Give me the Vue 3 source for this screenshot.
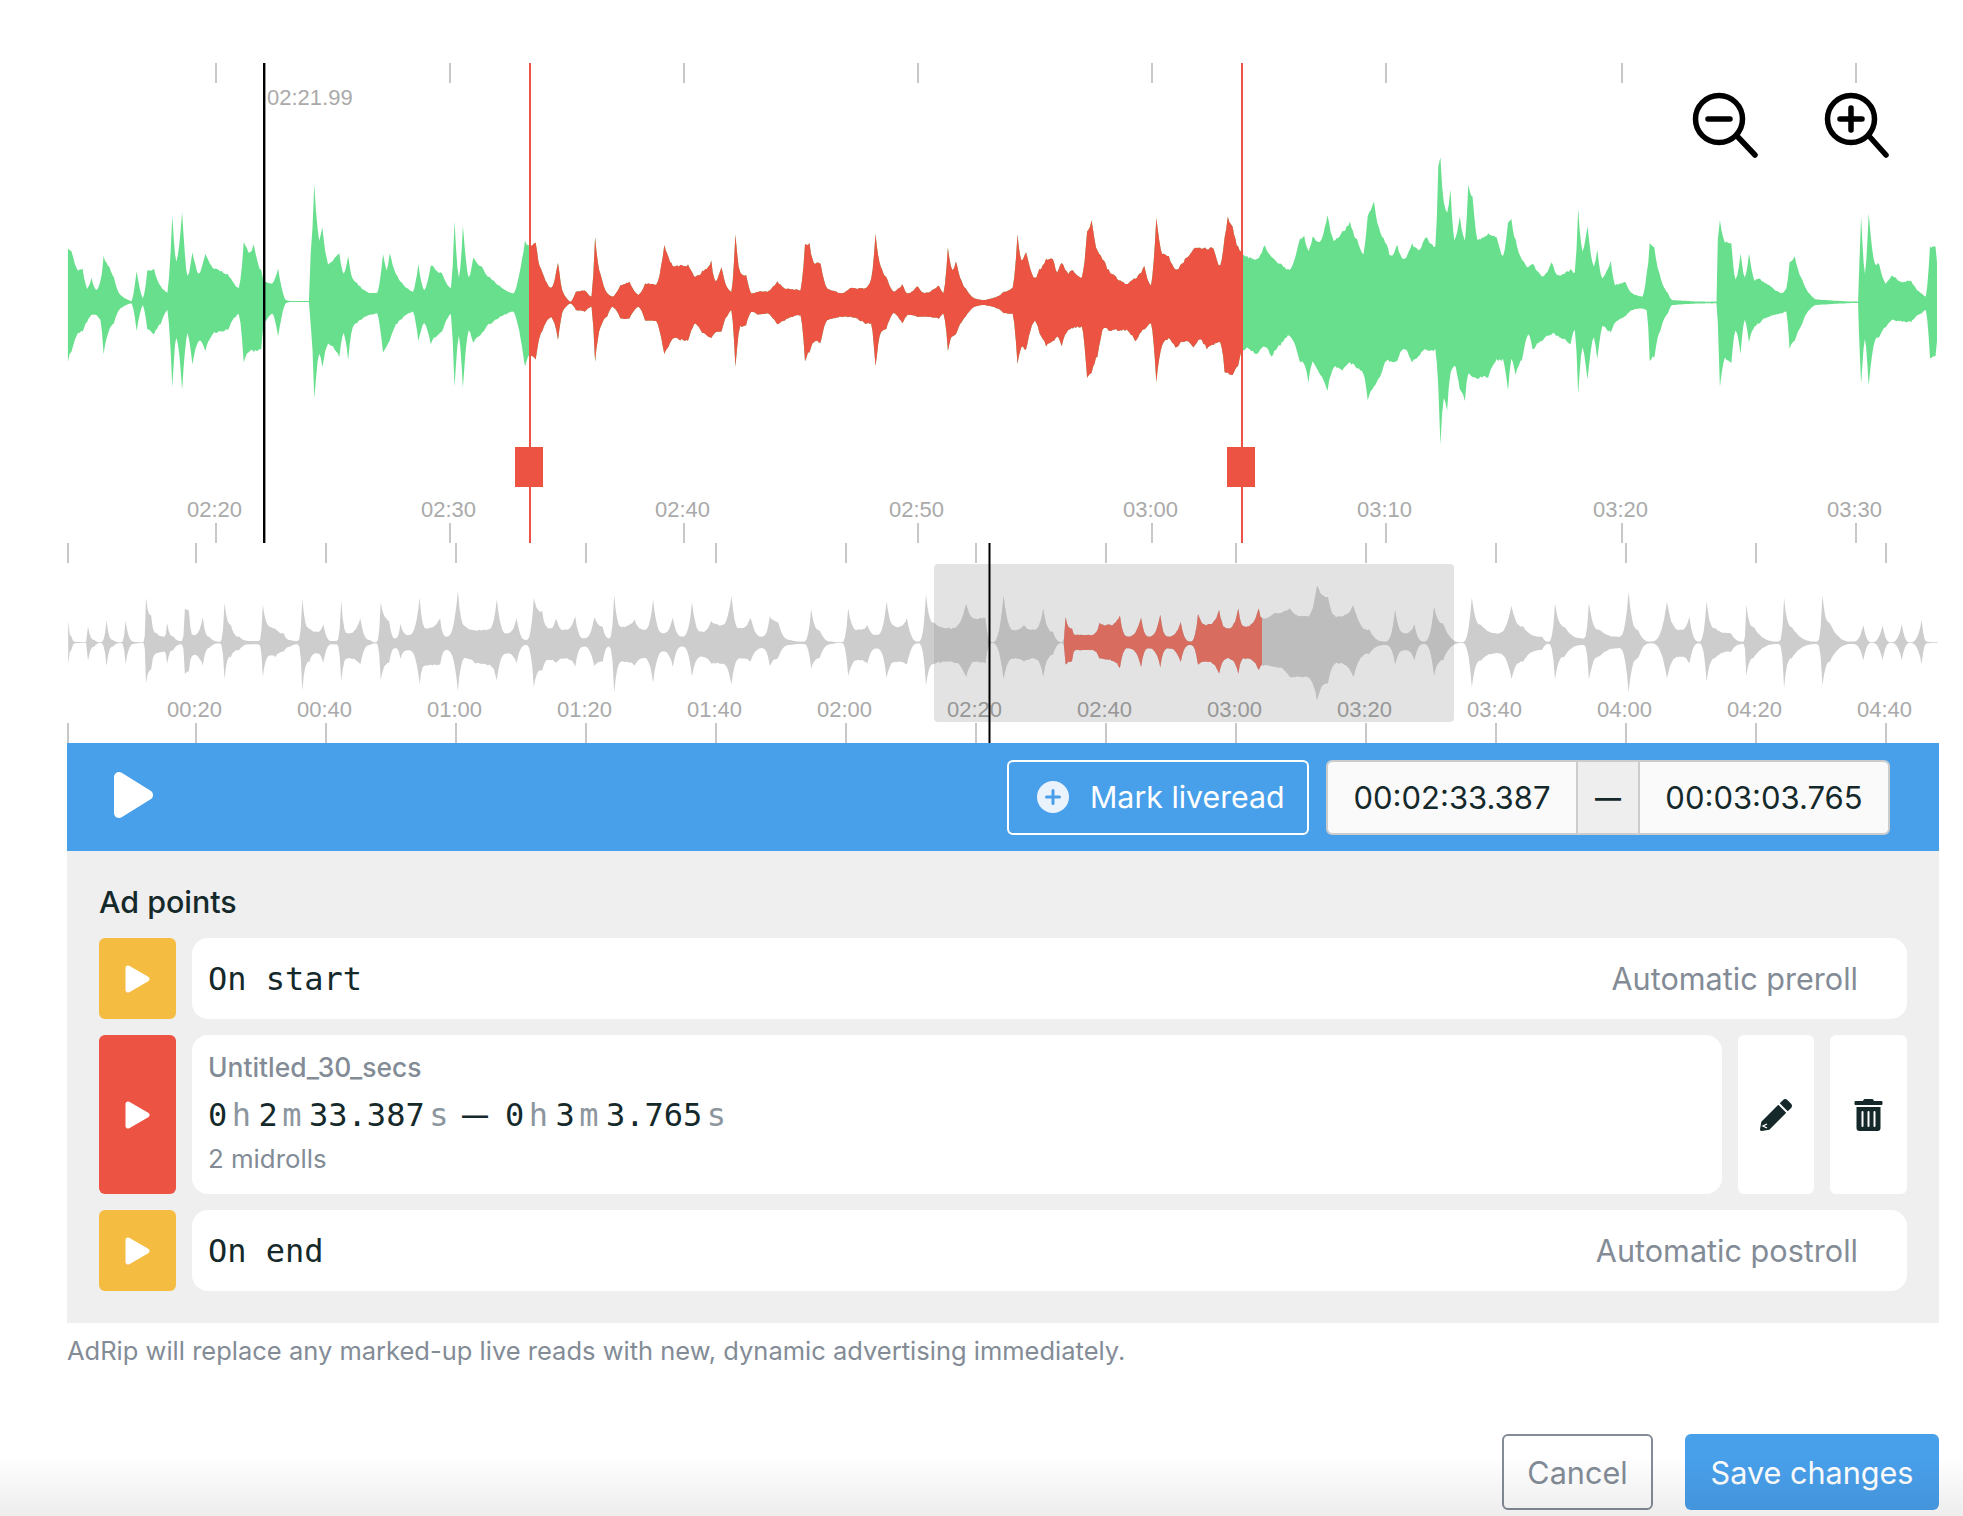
<script setup>
// Envelope points read off the recording: [x, top y, bottom y] in crop coordinates
const MAIN_A = [[152,630,962],[160,632,935],[175,690,880],[185,685,875],[195,745,845],[205,715,825],[215,750,825],[225,725,840],[232,648,945],[245,680,870],[255,712,850],[270,765,805],[295,783,790],[306,690,875],[320,775,795],[330,695,870],[345,685,885],[360,740,850],[375,758,810],[386,530,1040],[395,668,890],[408,512,1045],[420,710,880],[431,635,975],[445,700,900],[460,640,930],[480,685,880],[510,700,870],[535,745,822],[546,605,965],[560,640,930],[568,615,935],[585,690,930],[590,725,855],[610,730,820],[623,685,888],[640,780,790],[650,783,786],[692,783,786],[696,640,850],[704,433,1080],[715,600,940],[722,560,985],[735,670,910],[760,640,950],[770,700,880],[780,645,960],[790,715,860],[830,760,825],[845,758,820],[858,640,940],[866,690,920],[873,640,905],[890,710,850],[925,755,815],[937,672,900],[950,750,850],[965,675,910],[990,700,875],[1010,745,822],[1018,545,1040],[1028,715,890],[1037,558,1045],[1050,715,870],[1060,655,910],[1080,680,880],[1100,715,850],[1150,760,815],[1176,605,980],[1186,620,945],[1200,605,955],[1212,690,880],[1235,745,830],[1250,665,900],[1262,760,810],[1278,785,790],[1290,755,810],[1310,750,815],[1325,770,800],[1333,592,968],[1345,700,860],[1360,760,830],[1372,770,800],[1390,735,835],[1410,725,835],[1430,765,800],[1445,730,840],[1470,735,845],[1488,618,945],[1510,680,895]]
const MAIN_B = [[18,675,905],[35,710,850],[50,695,880],[70,665,895],[80,725,875],[93,682,875],[105,740,830],[115,755,810],[124,587,983],[135,700,860],[148,705,855],[160,760,815],[175,755,825],[195,755,820],[218,723,855],[235,745,840],[270,750,825],[280,612,965],[290,612,935],[300,670,905],[315,670,905],[330,745,840],[365,760,830],[380,745,830],[415,745,850],[428,720,850],[438,582,982],[450,680,875],[462,710,865],[478,755,820],[498,735,850],[510,760,825],[532,738,830],[548,760,830],[580,737,835],[590,760,820],[600,623,930],[610,690,890],[618,665,885],[640,745,830],[660,775,800],[680,780,795],[710,770,805],[725,755,820],[745,745,820],[756,582,975],[765,660,920],[775,635,930],[795,715,840],[805,690,880],[820,660,920],[835,655,905],[845,695,890],[855,665,915],[870,700,870],[880,688,865],[900,715,860],[912,575,1015],[922,542,1000],[935,630,950],[950,660,860],[960,690,870],[1000,730,870],[1020,715,905],[1040,680,870],[1055,738,850],[1067,533,1028],[1080,640,915],[1095,650,895],[1110,690,925],[1135,650,900],[1150,625,925],[1165,625,900],[1180,625,925],[1195,625,915],[1210,680,905],[1220,590,995],[1227,530,1000],[1238,560,1005],[1250,620,975],[1260,640,930],[1270,650,925],[1290,660,945],[1310,615,920],[1325,650,950],[1345,670,915],[1365,690,885]]
const MAIN_C = [[0,595,965],[10,590,970],[20,630,1025],[30,590,965],[45,610,1000],[65,525,1050],[80,600,980],[100,575,990],[118,545,970],[135,600,985],[150,640,1000],[160,525,1078],[175,487,1040],[190,575,1010],[205,610,960],[215,650,965],[230,615,965],[245,660,925],[265,610,965],[280,630,950],[297,590,930],[320,620,930],[327,380,1040],[332,352,1212],[340,490,1075],[348,520,1110],[356,450,1000],[365,600,975],[378,530,1050],[390,600,1080],[398,432,1000],[408,470,1010],[420,600,1015],[445,580,1010],[465,590,960],[480,650,960],[492,550,1050],[500,535,960],[510,600,1005],[525,660,960],[540,680,880],[550,670,930],[575,710,900],[595,665,880],[610,705,890],[640,690,915],[650,700,870],[658,505,1060],[668,635,925],[680,560,1020],[695,680,890],[703,630,960],[715,715,860],[735,660,880],[745,735,850],[770,725,830],[785,760,810],[810,770,805],[820,700,810],[827,610,960],[838,620,950],[850,700,880],[870,760,820],[880,780,795],[960,785,790],[985,785,790],[988,600,850],[993,542,1040],[1005,605,955],[1020,610,970],[1030,720,870],[1042,640,940],[1052,715,840],[1062,640,905],[1075,720,860],[1085,715,850],[1110,735,830],[1140,760,820],[1150,745,815],[1158,670,925],[1170,652,900],[1185,710,860],[1205,760,810],[1220,778,795],[1320,785,789],[1322,700,880],[1327,530,1030],[1336,700,900],[1345,522,1037],[1360,670,900],[1370,672,890],[1385,730,860],[1400,705,840],[1425,725,845],[1445,722,845],[1470,760,820],[1480,770,810],[1490,620,955],[1503,618,950],[1510,690,880]]
const MINI_A = [[107,275,400],[112,320,360],[118,335,340],[135,337,339],[138,288,392],[148,330,350],[158,337,339],[167,272,408],[177,330,350],[190,337,339],[197,272,402],[210,335,342],[225,337,339],[229,205,462],[237,255,420],[245,310,370],[258,320,365],[262,280,400],[272,320,360],[285,333,343],[290,235,432],[296,240,425],[303,315,375],[318,262,408],[328,320,355],[345,335,340],[352,218,445],[362,285,380],[375,320,360],[392,333,343],[406,333,343],[412,222,440],[425,290,375],[432,295,380],[445,310,365],[455,330,350],[467,333,343],[474,207,480],[485,295,395],[497,305,370],[507,283,400],[520,333,343],[528,333,343],[535,210,452],[545,310,385],[565,267,405],[580,330,345],[590,337,340],[597,218,452],[610,270,400],[620,325,355],[628,282,385],[640,315,360],[658,203,460],[668,295,405],[690,265,405],[700,320,360],[718,183,483],[730,290,385],[745,300,400],[765,298,405],[779,207,450],[795,310,370],[810,265,400],[825,330,345],[837,207,470],[850,245,420],[862,295,390],[872,265,400],[885,300,385],[902,258,410],[915,325,350],[932,262,410],[945,290,395],[955,325,350],[963,195,485],[975,290,395],[995,268,405],[1010,300,385],[1024,210,460],[1040,310,365],[1055,262,410],[1070,320,350],[1085,218,440],[1100,305,380],[1115,275,400],[1130,285,400],[1147,198,465],[1160,295,385],[1177,262,395],[1195,320,355],[1207,258,410],[1220,275,385],[1240,330,345],[1260,335,342],[1272,235,415],[1285,300,385],[1305,335,342],[1320,337,339],[1330,235,440],[1345,300,390],[1360,285,400],[1375,315,355],[1390,215,445],[1405,290,395],[1422,265,405],[1440,335,340],[1452,195,465],[1465,280,400],[1490,295,395],[1515,222,440],[1530,265,395],[1545,265,400]]
const MINI_B = [[50,337,339],[68,198,445],[85,300,385],[100,285,395],[115,300,385],[130,237,440],[145,305,375],[160,337,339],[165,262,405],[175,295,395],[180,315,360],[205,315,360],[218,280,385],[232,285,390],[250,255,415],[262,320,355],[283,262,410],[295,320,355],[313,255,410],[325,320,355],[345,275,395],[360,335,345],[372,250,405],[385,285,395],[405,240,430],[418,295,385],[435,237,430],[445,290,385],[467,235,420],[472,265,405],[490,250,410],[515,235,440],[540,260,440],[558,165,510],[575,200,460],[590,260,400],[615,225,440],[640,300,370],[665,335,345],[680,240,400],[695,310,360],[710,285,390],[725,335,342],[741,232,435],[755,280,390],[785,337,339],[800,200,470],[815,285,390],[840,310,370],[862,225,445],[880,290,395],[910,320,360],[920,335,342],[930,222,450],[945,290,380],[975,325,345],[983,220,450],[1000,300,380],[1030,320,355],[1045,185,485],[1060,300,385],[1080,335,340],[1105,215,445],[1125,300,380],[1140,262,400],[1155,335,340],[1167,212,455],[1180,295,385],[1205,310,365],[1225,335,342],[1229,225,440],[1240,290,385],[1280,335,342],[1288,205,472],[1300,290,385],[1340,335,342],[1348,195,465],[1360,280,395],[1395,335,342],[1412,285,390],[1425,337,339],[1442,285,390],[1455,337,339],[1472,285,390],[1485,337,339],[1503,272,402],[1512,335,340],[1530,337,339]]

// turn crop coordinates into page coordinates
function place(list, left, scale, top) {
  return list.map(([x, a, b]) => [left + x / scale, top + a / 3, top + b / 3])
}

// peaks rise steeply and tail off quickly, so the edge bends inwards between points
function bend(from, to, t, growing, power) {
  const eased = growing ? Math.pow(t, power) : 1 - Math.pow(1 - t, power)
  return from + (to - from) * eased
}

// fills in the fine jagged edge between envelope points
function wavePath(list, grain, power) {
  let seed = 7
  const rnd = () => {
    seed = (seed * 16807) % 2147483647
    return seed / 2147483647 - 0.5
  }
  const top = []
  const bottom = []
  for (let i = 0; i < list.length - 1; i++) {
    const [x0, a0, b0] = list[i]
    const [x1, a1, b1] = list[i + 1]
    const steps = Math.max(1, Math.round((x1 - x0) / 1.5))
    for (let s = 0; s < steps; s++) {
      const t = s / steps
      const a = bend(a0, a1, t, a1 < a0, power)
      const b = bend(b0, b1, t, b1 > b0, power)
      const n = Math.min(grain, (b - a) * 0.04)
      const x = (x0 + (x1 - x0) * t).toFixed(1)
      top.push(x + ' ' + (a + rnd() * n).toFixed(1))
      bottom.unshift(x + ' ' + (b + rnd() * n).toFixed(1))
    }
  }
  return 'M' + top.concat(bottom).join('L') + 'Z'
}

const mainPath = wavePath([
  ...place(MAIN_A, 0, 2.24, 40),
  ...place(MAIN_B, 680, 2.24, 40),
  ...place(MAIN_C, 1300, 2.365, 40)
], 2.5, 1.5)
const miniPath = wavePath([
  ...place(MINI_A, 0, 1.568, 530),
  ...place(MINI_B, 960, 1.563, 530)
], 1.5, 2.8)

const mainTicks = [216, 450, 684, 918, 1152, 1386, 1622, 1856]
const mainLabels = ['02:20', '02:30', '02:40', '02:50', '03:00', '03:10', '03:20', '03:30']
const miniLabels = ['00:20', '00:40', '01:00', '01:20', '01:40', '02:00', '02:20', '02:40', '03:00', '03:20', '03:40', '04:00', '04:20', '04:40']
const miniLabelTicks = miniLabels.map((_, i) => 196 + i * 130)
const miniTicks = [68, ...miniLabelTicks]
</script>

<template>
  <div class="page">
    <svg class="timeline" width="1963" height="743" viewBox="0 0 1963 743">
      <defs>
        <clipPath id="mainPicked"><rect x="530" y="60" width="712" height="460" /></clipPath>
        <clipPath id="miniSelected"><rect x="934" y="545" width="520" height="180" /></clipPath>
        <clipPath id="miniPicked"><rect x="1064" y="545" width="198" height="180" /></clipPath>
      </defs>

      <!-- zoomed waveform -->
      <g fill="#c8c8c8">
        <rect v-for="x in mainTicks" :key="'a' + x" :x="x - 1" y="63" width="2" height="20" />
        <rect v-for="x in mainTicks" :key="'b' + x" :x="x - 1" y="523" width="2" height="20" />
      </g>
      <text
        v-for="(label, i) in mainLabels"
        :key="label"
        class="tick-label"
        :x="mainTicks[i] - 1.5"
        y="517"
        text-anchor="middle"
      >{{ label }}</text>
      <path :d="mainPath" fill="#68df8c" />
      <path :d="mainPath" fill="#ed5343" clip-path="url(#mainPicked)" />

      <rect x="263" y="63" width="2.4" height="480" fill="#000" />
      <text class="tick-label" x="267" y="105">02:21.99</text>
      <rect x="529" y="63" width="2" height="480" fill="#ed5343" />
      <rect x="1241" y="63" width="2" height="480" fill="#ed5343" />
      <rect x="515" y="447" width="28" height="40" fill="#ed5343" />
      <rect x="1227" y="447" width="28" height="40" fill="#ed5343" />

      <!-- overview waveform -->
      <g fill="#c8c8c8">
        <rect v-for="x in miniTicks" :key="'c' + x" :x="x - 1" y="543" width="2" height="20" />
        <rect v-for="x in miniTicks" :key="'d' + x" :x="x - 1" y="723" width="2" height="20" />
      </g>
      <text
        v-for="(label, i) in miniLabels"
        :key="label + 'm'"
        class="tick-label"
        :x="miniLabelTicks[i] - 1.5"
        y="717"
        text-anchor="middle"
      >{{ label }}</text>
      <rect x="934" y="564" width="520" height="158" rx="4" fill="#000" fill-opacity="0.11" />
      <path :d="miniPath" fill="#cdcdcd" />
      <path :d="miniPath" fill="#bdbdbd" clip-path="url(#miniSelected)" />
      <path :d="miniPath" fill="#d76c5f" clip-path="url(#miniPicked)" />
      <rect x="988.5" y="543" width="2" height="200" fill="#000" />

      <!-- zoom buttons -->
      <g fill="none" stroke="#000" stroke-width="5.5" stroke-linecap="round">
        <circle cx="1719" cy="119" r="23.5" />
        <path d="M1737 136 L1755 155" />
        <path d="M1708 119 H1730" />
        <circle cx="1851" cy="119" r="23.5" />
        <path d="M1869 136 L1886 155" />
        <path d="M1840 119 H1862 M1851 108 V130" />
      </g>
    </svg>

    <div class="content">
      <div class="toolbar">
        <svg class="big-play" width="39" height="46" viewBox="0 0 39 46">
          <path d="M5 5 L34 23 L5 41 Z" fill="#fff" stroke="#fff" stroke-width="10" stroke-linejoin="round" />
        </svg>
        <button class="mark-btn">
          <svg width="32" height="32" viewBox="0 0 32 32">
            <circle cx="16" cy="16" r="16" fill="#eaf3fc" />
            <path d="M16 9.5 V22.5 M9.5 16 H22.5" stroke="#489fea" stroke-width="3" stroke-linecap="round" />
          </svg>
          <span>Mark liveread</span>
        </button>
        <div class="range">
          <div class="range-field">00:02:33.387</div>
          <div class="range-sep">—</div>
          <div class="range-field">00:03:03.765</div>
        </div>
      </div>

      <div class="panel">
        <h3 class="panel-title">Ad points</h3>

        <div class="row">
          <div class="play-box yellow">
            <svg width="25" height="28" viewBox="0 0 25 28"><path d="M3 3 L22 14 L3 25 Z" fill="#fff" stroke="#fff" stroke-width="5" stroke-linejoin="round" /></svg>
          </div>
          <div class="row-body">
            <span class="mono">On start</span>
            <span class="muted">Automatic preroll</span>
          </div>
        </div>

        <div class="row tall">
          <div class="play-box red">
            <svg width="25" height="28" viewBox="0 0 25 28"><path d="M3 3 L22 14 L3 25 Z" fill="#fff" stroke="#fff" stroke-width="5" stroke-linejoin="round" /></svg>
          </div>
          <div class="row-body stacked">
            <div class="ad-name">Untitled_30_secs</div>
            <div class="mono times">
              <span>0</span><span class="unit">h</span><span>2</span><span class="unit">m</span><span>33.387</span><span class="unit">s</span>
              <span class="dash">—</span>
              <span>0</span><span class="unit">h</span><span>3</span><span class="unit">m</span><span>3.765</span><span class="unit">s</span>
            </div>
            <div class="ad-count">2 midrolls</div>
          </div>
          <div class="icon-box edit">
            <svg width="32" height="32" viewBox="0 0 512 512">
              <path fill="#15292b" d="M497.9 142.1l-46.1 46.1c-4.7 4.7-12.3 4.7-17 0l-111-111c-4.7-4.7-4.7-12.3 0-17l46.1-46.1c18.7-18.7 49.1-18.7 67.9 0l60.1 60.1c18.8 18.7 18.8 49.1 0 67.9zM284.2 99.8L21.6 362.4.4 483.9c-2.9 16.4 11.4 30.6 27.8 27.8l121.5-21.3 262.6-262.6c4.7-4.7 4.7-12.3 0-17l-111-111c-4.8-4.7-12.4-4.7-17.1 0z" />
              <path fill="none" stroke="#fff" stroke-width="22" d="M112 400 L48 432 L112 464" />
            </svg>
          </div>
          <div class="icon-box">
            <svg width="29" height="32" viewBox="0 0 448 512"><path fill="#15292b" d="M32 464a48 48 0 0 0 48 48h288a48 48 0 0 0 48-48V128H32zm272-256a16 16 0 0 1 32 0v224a16 16 0 0 1-32 0zm-96 0a16 16 0 0 1 32 0v224a16 16 0 0 1-32 0zm-96 0a16 16 0 0 1 32 0v224a16 16 0 0 1-32 0zM432 32H312l-9.4-18.7A24 24 0 0 0 281.1 0H166.8a23.72 23.72 0 0 0-21.4 13.3L136 32H16A16 16 0 0 0 0 48v32a16 16 0 0 0 16 16h416a16 16 0 0 0 16-16V48a16 16 0 0 0-16-16z" /></svg>
          </div>
        </div>

        <div class="row">
          <div class="play-box yellow">
            <svg width="25" height="28" viewBox="0 0 25 28"><path d="M3 3 L22 14 L3 25 Z" fill="#fff" stroke="#fff" stroke-width="5" stroke-linejoin="round" /></svg>
          </div>
          <div class="row-body">
            <span class="mono">On end</span>
            <span class="muted">Automatic postroll</span>
          </div>
        </div>
      </div>

      <p class="note">AdRip will replace any marked-up live reads with new, dynamic advertising immediately.</p>

      <div class="actions">
        <button class="btn-cancel">Cancel</button>
        <button class="btn-save">Save changes</button>
      </div>
    </div>

    <div class="fade"></div>
  </div>
</template>

<style scoped>
.page {
  position: relative;
  width: 1963px;
  height: 1516px;
  overflow: hidden;
  background: #fff;
  font-family: Inter, "Liberation Sans", sans-serif;
  color: #15292b;
}

.timeline {
  display: block;
}

.tick-label {
  font-family: "Liberation Sans", Arial, sans-serif;
  font-size: 22px;
  fill: #aaa;
}

.content {
  margin: 0 24px 0 67px;
}

/* blue bar */
.toolbar {
  display: flex;
  align-items: center;
  height: 108px;
  padding: 0 49px 0 47px;
  background: #489fea;
}

.big-play {
  margin-right: auto;
  margin-top: -4px;
}

.mark-btn {
  display: flex;
  align-items: center;
  gap: 21px;
  width: 302px;
  height: 75px;
  padding: 0 0 0 28px;
  border: 2px solid #fff;
  border-radius: 6px;
  background: transparent;
  color: #fff;
  font: 400 30.3px Inter, "Liberation Sans", sans-serif;
  box-sizing: border-box;
}

.range {
  display: flex;
  height: 75px;
  margin-left: 17px;
  border: 2px solid #ccc;
  border-radius: 6px;
  overflow: hidden;
  box-sizing: border-box;
  font-size: 31px;
}

.range-field {
  display: flex;
  align-items: center;
  justify-content: center;
  width: 248px;
  background: #fafafa;
}

.range-sep {
  display: flex;
  align-items: center;
  justify-content: center;
  width: 60px;
  background: #eee;
  border-left: 2px solid #ccc;
  border-right: 2px solid #ccc;
  font-size: 26px;
  font-weight: 600;
}

/* ad points */
.panel {
  display: flex;
  flex-direction: column;
  gap: 16px;
  padding: 30px 32px 32px;
  background: #efefef;
}

.panel-title {
  margin: 0 0 -1px;
  font-size: 30.4px;
  font-weight: 500;
  line-height: 42px;
}

.row {
  display: flex;
  gap: 16px;
  height: 81px;
}

.row.tall {
  height: 159px;
}

.play-box {
  display: flex;
  align-items: center;
  justify-content: center;
  flex: 0 0 77px;
  border-radius: 6px;
}

.yellow {
  background: #f5bc42;
}

.red {
  background: #ed5343;
}

.row-body {
  display: flex;
  align-items: center;
  justify-content: space-between;
  flex: 1;
  padding: 0 49px 0 16px;
  border-radius: 16px;
  background: #fff;
}

.row-body.stacked {
  flex-direction: column;
  align-items: flex-start;
  justify-content: flex-start;
  padding-top: 12px;
}

.mono {
  font-family: "DejaVu Sans Mono", "Liberation Mono", monospace;
  font-size: 32px;
  color: #15292b;
}

.muted {
  font-size: 30.6px;
  color: #838c96;
}

.ad-name {
  font-size: 26.4px;
  font-weight: 500;
  line-height: 40px;
  color: #838c96;
}

.times {
  display: flex;
  margin: 6px 0 2px;
  line-height: 44px;
}

.unit {
  margin: 0 7.5px 0 4.5px;
  color: #8c969e;
}

.dash {
  margin: 0 17px 0 6px;
  font-family: "Liberation Sans", sans-serif;
  font-size: 26px;
  font-weight: 700;
}

.ad-count {
  font-size: 25.8px;
  line-height: 40px;
  color: #838c96;
}

.icon-box {
  display: flex;
  align-items: center;
  justify-content: center;
  flex: 0 0 77px;
  border-radius: 6px;
  background: #fff;
}

.icon-box.edit {
  flex-basis: 76px;
}

.note {
  margin: 10px 0 0;
  font-size: 25.5px;
  line-height: 36px;
  color: #838c96;
}

.actions {
  display: flex;
  justify-content: flex-end;
  gap: 32px;
  margin-top: 65px;
}

.btn-cancel,
.btn-save {
  height: 76px;
  border-radius: 6px;
  font: 400 30.6px Inter, "Liberation Sans", sans-serif;
  box-sizing: border-box;
}

.btn-cancel {
  width: 151px;
  border: 2px solid #838c96;
  background: #fff;
  color: #838c96;
}

.btn-save {
  width: 254px;
  border: none;
  background: #489fea;
  color: #fff;
}

/* the grey shade along the bottom edge */
.fade {
  position: absolute;
  left: 0;
  right: 0;
  bottom: 0;
  height: 60px;
  background: linear-gradient(to bottom, rgba(0, 0, 0, 0), rgba(0, 0, 0, 0.07));
  pointer-events: none;
}
</style>
